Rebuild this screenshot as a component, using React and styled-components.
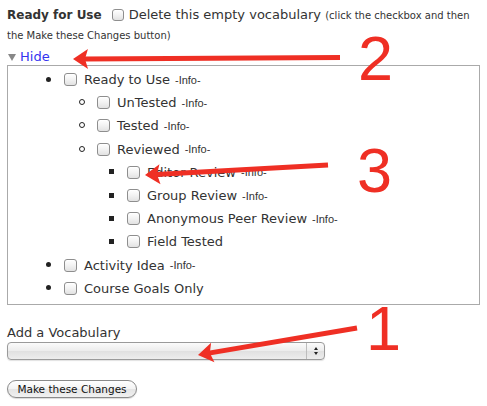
import React from "react";
import styled, { createGlobalStyle } from "styled-components";

const Global = createGlobalStyle`
  html, body { margin: 0; padding: 0; background: #fff; }
  body { font-family: "DejaVu Sans", Verdana, sans-serif; color: #333; }
`;

const Page = styled.div`
  position: relative;
  width: 487px;
  height: 406px;
  box-sizing: border-box;
  padding: 5px 7px 0 7px;
  overflow: hidden;
`;

const Header = styled.div`
  font-size: 13px;
  line-height: 19px;
  color: #333;
`;

const Title = styled.span`
  font-weight: bold;
  font-size: 12px;
`;

const Check = styled.span`
  display: inline-block;
  box-sizing: border-box;
  width: ${(p) => p.$size || 13}px;
  height: ${(p) => p.$size || 13}px;
  border: 1px solid #8e8e8e;
  border-radius: 3px;
  background: linear-gradient(#ffffff, #f2f2f2 50%, #e2e2e2);
  box-shadow: inset 0 1px 0 #fff;
  flex: none;
`;

const HeadCheck = styled(Check)`
  vertical-align: -2px;
  margin: 0 5px 0 10px;
`;

const Note = styled.span`
  font-size: 10px;
`;

const Toggle = styled.div`
  display: flex;
  align-items: center;
  height: 15px;
  margin-top: 4px;
  font-size: 13px;
  line-height: 15px;
`;

const Triangle = styled.span`
  width: 0;
  height: 0;
  border-left: 4px solid transparent;
  border-right: 4px solid transparent;
  border-top: 7px solid #888;
  margin: 1px 4px 0 1px;
`;

const Link = styled.a`
  color: #3434f0;
  text-decoration: none;
`;

const Box = styled.ul`
  list-style: none;
  margin: 1px 0 0 0;
  padding: 2px 0 4px 0;
  border: 1px solid #aaa;
  width: 473px;
  box-sizing: border-box;
`;

const INDENT = [38, 71, 101];

const Item = styled.li`
  display: flex;
  align-items: center;
  height: 23.2px;
  padding-left: ${(p) => INDENT[p.$level]}px;
  font-size: 13px;
  color: #333;
  white-space: nowrap;
`;

const Marker = styled.span`
  width: 18px;
  display: flex;
  align-items: center;
  flex: none;
  &::before {
    content: "";
    display: block;
    box-sizing: border-box;
    width: ${(p) => (p.$level === 1 ? 6 : 5)}px;
    height: ${(p) => (p.$level === 1 ? 6 : 5)}px;
    border-radius: ${(p) => (p.$level === 2 ? 0 : "50%")};
    background: ${(p) => (p.$level === 1 ? "transparent" : "#222")};
    border: ${(p) => (p.$level === 1 ? "1px solid #222" : "none")};
    margin-top: -1px;
  }
`;

const Label = styled.span`
  margin-left: 7px;
`;

const Info = styled.span`
  font-family: "Liberation Sans", Arial, sans-serif;
  font-size: 11px;
  margin-left: 5px;
  color: #333;
`;

const FieldLabel = styled.div`
  margin-top: 18px;
  font-size: 13px;
  line-height: 19px;
`;

const Select = styled.div`
  display: flex;
  width: 318px;
  height: 18px;
  box-sizing: border-box;
  border: 1px solid #9a9a9a;
  border-radius: 4px;
  background: linear-gradient(#fbfbfb, #ececec 50%, #e0e0e0 51%, #ededed);
  box-shadow: 0 1px 1px rgba(0, 0, 0, 0.12);
`;

const SelectValue = styled.span`
  flex: 1;
`;

const SelectArrows = styled.span`
  width: 17px;
  border-left: 1px solid #bdbdbd;
  display: flex;
  flex-direction: column;
  align-items: center;
  justify-content: center;
  gap: 2px;
`;

const ArrowTri = styled.span`
  width: 0;
  height: 0;
  border-left: 2.5px solid transparent;
  border-right: 2.5px solid transparent;
  ${(p) =>
    p.$up ? "border-bottom: 3px solid #222;" : "border-top: 3px solid #222;"}
`;

const Button = styled.button`
  display: block;
  margin-top: 20px;
  width: 130px;
  height: 18px;
  padding: 0;
  border: 1px solid #8a8a8a;
  border-radius: 9px;
  background: linear-gradient(#ffffff, #f3f3f3 50%, #e4e4e4 51%, #f1f1f1);
  box-shadow: 0 1px 1px rgba(0, 0, 0, 0.15);
  font-family: "DejaVu Sans", "Lucida Grande", sans-serif;
  font-size: 10.5px;
  color: #111;
  line-height: 16px;
`;

const Overlay = styled.svg`
  position: absolute;
  left: 0;
  top: 0;
  pointer-events: none;
`;

const RED = "#ef2f24";

function Arrow({ tip, tail }) {
  const [tx, ty] = tip;
  const [sx, sy] = tail;
  const dx = sx - tx;
  const dy = sy - ty;
  const len = Math.hypot(dx, dy);
  const ux = dx / len;
  const uy = dy / len;
  const px = -uy;
  const py = ux;
  const hl = 15;
  const hw = 10;
  const notch = 3;
  const pts = [
    [tx, ty],
    [tx + ux * hl + px * hw, ty + uy * hl + py * hw],
    [tx + ux * (hl - notch), ty + uy * (hl - notch)],
    [tx + ux * hl - px * hw, ty + uy * hl - py * hw],
  ]
    .map((p) => p.join(","))
    .join(" ");
  return (
    <g fill={RED} stroke="none">
      <line
        x1={tx + ux * (hl - notch - 1)}
        y1={ty + uy * (hl - notch - 1)}
        x2={sx}
        y2={sy}
        stroke={RED}
        strokeWidth="5"
      />
      <polygon points={pts} />
    </g>
  );
}

const rows = [
  { level: 0, label: "Ready to Use", info: true },
  { level: 1, label: "UnTested", info: true },
  { level: 1, label: "Tested", info: true },
  { level: 1, label: "Reviewed", info: true },
  { level: 2, label: "Editor Review", info: true },
  { level: 2, label: "Group Review", info: true },
  { level: 2, label: "Anonymous Peer Review", info: true },
  { level: 2, label: "Field Tested", info: false },
  { level: 0, label: "Activity Idea", info: true },
  { level: 0, label: "Course Goals Only", info: false },
];

export default function App() {
  return (
    <Page>
      <Global />
      <Header>
        <Title>Ready for Use</Title>
        <HeadCheck $size={12} />
        Delete this empty vocabulary{" "}
        <Note>
          (click the checkbox and then
          <br />
          the Make these Changes button)
        </Note>
      </Header>
      <Toggle>
        <Triangle />
        <Link href="#">Hide</Link>
      </Toggle>
      <Box>
        {rows.map((r) => (
          <Item key={r.label} $level={r.level}>
            <Marker $level={r.level} />
            <Check />
            <Label>{r.label}</Label>
            {r.info && <Info>-Info-</Info>}
          </Item>
        ))}
      </Box>
      <FieldLabel>Add a Vocabulary</FieldLabel>
      <Select>
        <SelectValue />
        <SelectArrows>
          <ArrowTri $up />
          <ArrowTri />
        </SelectArrows>
      </Select>
      <Button>Make these Changes</Button>
      <Overlay width="487" height="406" viewBox="0 0 487 406">
        <Arrow tip={[73, 59]} tail={[340, 57.5]} />
        <Arrow tip={[145, 175]} tail={[328, 165]} />
        <Arrow tip={[198, 355]} tail={[357, 328]} />
        <g fill={RED} fontFamily="'Liberation Sans', Arial, sans-serif" fontSize="63">
          <text x="358" y="80">2</text>
          <text x="357" y="192">3</text>
          <text x="366" y="350">1</text>
        </g>
      </Overlay>
    </Page>
  );
}
